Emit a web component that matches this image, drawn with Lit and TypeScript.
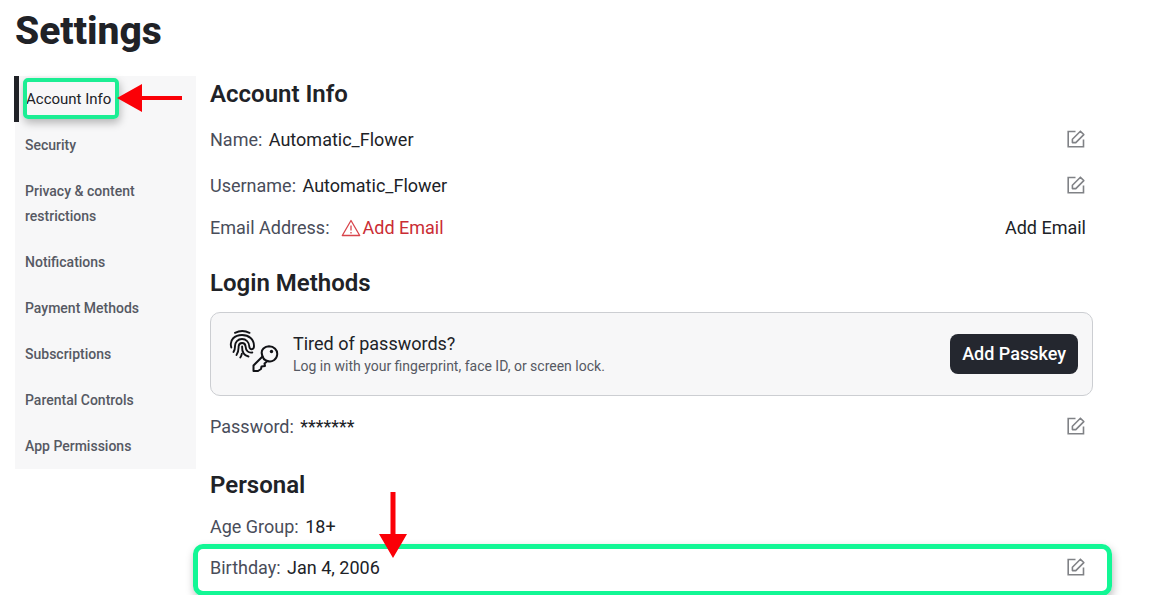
import { LitElement, html, css, svg } from "lit";
import { customElement, property } from "lit/decorators.js";

const editIcon = html`<svg viewBox="0 0 18 18" width="18" height="18" fill="none" stroke="#808286" stroke-width="1.6" aria-hidden="true">
  <path d="M8.5 1.5H1.2V16.8H16.5V9.5" />
  <path d="M5.4 12.6V9.2L13.4 1.2L16.8 4.6L8.8 12.6Z" stroke-linejoin="round" />
</svg>`;

const whorl = svg`<g stroke-width="1.900">
  <path d="M6 3.800C10.500 1.600 16 1.600 20.500 3.800" />
  <path d="M2.300 18.500C0 10.500 6 6 13 6C20 6 25 10.500 25 17C25 21.200 20.500 21.200 20.300 17.500C20 13 17 10 13 10C9 10 5.800 13 6 17.500C6 20 5.500 21.500 4.500 23" />
  <path d="M7.500 26C9.800 22.800 9.500 20 9.600 17.500C10 12.800 16.200 12.800 16.600 17.500C16.800 21.800 19.500 24.200 23.300 23.500" />
  <path d="M13.100 17.500C12.900 22.800 15 26.500 19.500 27.500" />
  <path d="M11.300 28.500C12.100 27.300 12.600 26 12.800 24.800" />
</g>`;

const passkeyIcon = html`<svg viewBox="0 0 50 44" width="50" height="44" fill="none" stroke="#111216" stroke-linecap="round" aria-hidden="true">
  ${whorl}
  <g stroke-width="2" stroke-linejoin="round">
    <path d="M33 25.500C31.500 20.500 36 17.300 40 17.300C45 17.500 48.600 21 48.200 25.500C47.800 30.500 43 33.600 38.500 32L35.500 34.500L36 37L32.500 37.500L32 40L29 42H24.500V36.500L33.500 27.500" />
    <path d="M33 25.500C33.500 29 35.500 31.200 38.500 32" />
  </g>
  <circle cx="42.500" cy="22.500" r="1.700" fill="#111216" stroke="none" />
</svg>`;

const warningIcon = html`<svg viewBox="0 0 20 18" width="20" height="18" fill="none" stroke="#d8444b" stroke-width="1.300" aria-hidden="true">
  <path stroke-linejoin="round" d="M10 1.500L18.700 16.500H1.300Z" />
  <path d="M10 6.500V11.500M10 13V14.500" />
</svg>`;

@customElement("settings-row")
export class SettingsRow extends LitElement {
  @property() label = "";
  @property() value = "";
  @property({ type: Boolean }) editable = false;

  static styles = css`
    :host { display: flex; align-items: center; justify-content: space-between; color: #202227; }
    .label { color: #494d5a; margin-right: 2px; }
    .edit { display: flex; padding: 0 0 2px; margin-right: 8px; border: 0; background: none; cursor: pointer; }
  `;

  render() {
    return html`
      <span><span class="label">${this.label}:</span> ${this.value}</span>
      ${this.editable
        ? html`<button class="edit" aria-label="Edit ${this.label}">${editIcon}</button>`
        : ""}
    `;
  }
}

@customElement("app-root")
export class AppRoot extends LitElement {
  static styles = css`
    :host {
      display: block;
      box-sizing: border-box;
      height: 100vh;
      overflow: hidden;
      padding: 10px 64px 0 15px;
      background: #fff;
      color: #202227;
      font: 400 18px/24px Roboto, sans-serif;
    }
    * { box-sizing: border-box; }
    h1, h2, p { margin: 0; }
    h1 { font-size: 39px; line-height: 42px; font-weight: 800; }
    h2 { font-size: 24px; line-height: 28px; font-weight: 600; }
    a { color: inherit; text-decoration: none; }
    .layout { display: grid; grid-template-columns: 181px minmax(0, 1fr); gap: 14px; margin-top: 24px; align-items: start; }
    .menu { display: flex; flex-direction: column; gap: 1px; background: #f7f7f8; font-size: 14px; line-height: 25px; font-weight: 500; color: #565963; }
    .item { padding: 10px; }
    .current { position: relative; padding: 11px 10px 10px 7px; border-left: 5px solid #202227; margin-left: -1px; color: #202227; font-size: 15px; font-weight: 400; }
    .mark { position: absolute; border: 4px solid #1cee94; box-shadow: 1px 4px 8px #0004; pointer-events: none; }
    .tab-mark { left: 4px; top: 2px; width: 96px; height: 41px; border-radius: 5px; }
    .arrow { position: absolute; fill: #fb0007; pointer-events: none; }
    .tab-arrow { left: 98px; top: 7px; }
    .content { padding-top: 4px; }
    .name { margin-top: 20px; }
    .username { margin-top: 22px; }
    .email { display: flex; align-items: center; margin-top: 18px; }
    .email-label { color: #494d5a; margin-right: 11px; }
    .warn { display: flex; align-items: center; gap: 2px; color: #ca2c34; }
    .add { margin-left: auto; margin-right: 7px; padding: 0; border: 0; background: none; font: inherit; color: inherit; cursor: pointer; }
    .login { margin-top: 29px; }
    .card { display: flex; align-items: center; gap: 14px; height: 84px; margin-top: 15px; padding: 0 14px 0 18px; border: 1px solid #ccced2; border-radius: 10px; background: #f7f7f8; }
    .card-icon { display: flex; margin-bottom: 6px; }
    .copy { flex: 1; }
    .title { font-size: 18px; line-height: 24px; }
    .hint { font-size: 14px; line-height: 20px; color: #565963; }
    .passkey { height: 40px; padding: 0 12px; border: 0; border-radius: 8px; background: #24272f; color: #fff; font: 500 18px/24px Roboto, sans-serif; cursor: pointer; }
    .password { margin-top: 19px; }
    .personal { margin-top: 32px; }
    .age { margin-top: 16px; }
    .birthday { position: relative; margin-top: 17px; }
    .row-mark { left: -17px; right: -19px; top: -12px; height: 52px; border-width: 5px; border-color: #12f795; border-radius: 10px; }
    .row-arrow { left: 168px; top: -64px; }
  `;

  render() {
    const menu = ["Security", "Privacy & content restrictions", "Notifications", "Payment Methods", "Subscriptions", "Parental Controls", "App Permissions"];
    return html`
      <h1>Settings</h1>
      <div class="layout">
        <nav class="menu" aria-label="Settings">
          <a class="item current" href="#" aria-current="page">
            Account Info
            <span class="mark tab-mark"></span>
            <svg class="arrow tab-arrow" width="66" height="30" viewBox="0 0 66 30"><path d="M0 15L25 1V13H65V17H25V29Z" /></svg>
          </a>
          ${menu.map((name) => html`<a class="item" href="#">${name}</a>`)}
        </nav>
        <main class="content">
          <h2>Account Info</h2>
          <settings-row class="name" label="Name" value="Automatic_Flower" editable></settings-row>
          <settings-row class="username" label="Username" value="Automatic_Flower" editable></settings-row>
          <div class="email">
            <span class="email-label">Email Address:</span>
            <span class="warn">${warningIcon}Add Email</span>
            <button class="add">Add Email</button>
          </div>
          <h2 class="login">Login Methods</h2>
          <section class="card">
            <span class="card-icon">${passkeyIcon}</span>
            <div class="copy">
              <p class="title">Tired of passwords?</p>
              <p class="hint">Log in with your fingerprint, face ID, or screen lock.</p>
            </div>
            <button class="passkey">Add Passkey</button>
          </section>
          <settings-row class="password" label="Password" value="*******" editable></settings-row>
          <h2 class="personal">Personal</h2>
          <settings-row class="age" label="Age Group" value="18+"></settings-row>
          <div class="birthday">
            <settings-row label="Birthday" value="Jan 4, 2006" editable></settings-row>
            <span class="mark row-mark"></span>
            <svg class="arrow row-arrow" width="30" height="66" viewBox="0 0 30 66"><path d="M12.500 0H17.500V42H29L15 66L1 42H12.500Z" /></svg>
          </div>
        </main>
      </div>
    `;
  }
}
